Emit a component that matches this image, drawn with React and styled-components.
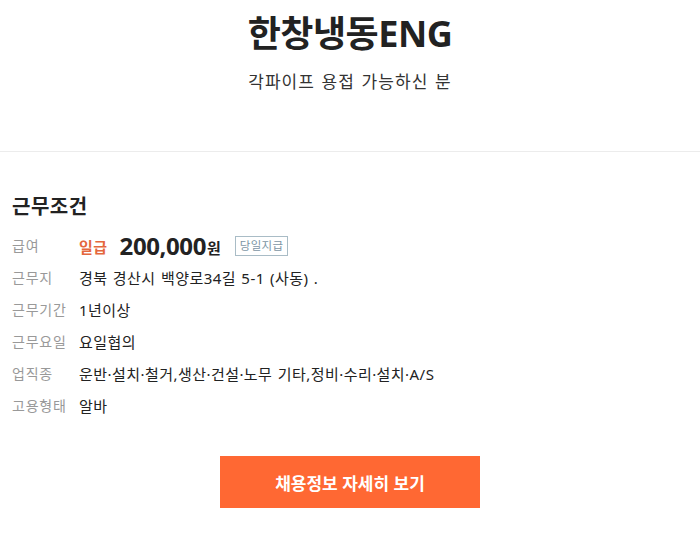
import styled, { createGlobalStyle } from "styled-components"

const Global = createGlobalStyle`
  body {
    margin: 0;
    background: #fff;
    font-family: "Noto Sans", "Noto Sans CJK KR", sans-serif;
    color: #222;
  }
`

const rows = [
  { label: "근무지", value: "경북 경산시 백양로34길 5-1 (사동) ." },
  { label: "근무기간", value: "1년이상" },
  { label: "근무요일", value: "요일협의" },
  { label: "업직종", value: "운반·설치·철거,생산·건설·노무 기타,정비·수리·설치·A/S" },
  { label: "고용형태", value: "알바" },
]

function App() {
  return (
    <Page>
      <Global />
      <Header>
        <Title>한창냉동ENG</Title>
        <Subtitle>각파이프 용접 가능하신 분</Subtitle>
      </Header>
      <Section>
        <SectionTitle>근무조건</SectionTitle>
        <Rows>
          <Row>
            <Label>급여</Label>
            <Pay>
              <PayType>일급</PayType>
              <Amount>200,000</Amount>
              <Won>원</Won>
              <Badge>당일지급</Badge>
            </Pay>
          </Row>
          {rows.map((r) => (
            <Row key={r.label}>
              <Label>{r.label}</Label>
              <Value>{r.value}</Value>
            </Row>
          ))}
        </Rows>
        <ButtonWrap>
          <DetailButton>채용정보 자세히 보기</DetailButton>
        </ButtonWrap>
      </Section>
    </Page>
  )
}

export default App

const Page = styled.div`
  width: 700px;
  height: 548px;
  overflow: hidden;
`
const Header = styled.div`
  display: flex;
  flex-direction: column;
  align-items: center;
  padding-top: 11px;
  height: 152px;
  box-sizing: border-box;
  border-bottom: 1px solid #ececec;
`
const Title = styled.h1`
  margin: 0;
  font-size: 36px;
  font-weight: 700;
  line-height: 46px;
  color: #222;
  letter-spacing: -0.5px;
`
const Subtitle = styled.p`
  margin: 14px 0 0;
  font-size: 17px;
  line-height: 22px;
  color: #333;
  letter-spacing: 1.1px;
  word-spacing: 1px;
`
const Section = styled.div`
  padding: 42px 12px 0;
`
const SectionTitle = styled.h2`
  margin: 0;
  font-size: 20px;
  font-weight: 700;
  line-height: 26px;
  color: #222;
  letter-spacing: 0.5px;
`
const Rows = styled.div`
  display: flex;
  flex-direction: column;
  margin-top: 10px;
`
const Row = styled.div`
  display: flex;
  align-items: center;
  height: 32px;
`
const Label = styled.div`
  width: 67px;
  font-size: 14px;
  line-height: 20px;
  color: #999;
  white-space: nowrap;
  letter-spacing: 0.8px;
`
const Value = styled.div`
  font-size: 15px;
  line-height: 20px;
  color: #222;
  letter-spacing: 0.45px;
  word-spacing: 1px;
`
const Pay = styled.div`
  display: flex;
  align-items: center;
`
const PayType = styled.span`
  font-size: 15px;
  font-weight: 700;
  color: #e4673d;
  margin-right: 12px;
  letter-spacing: 0.5px;
`
const Amount = styled.span`
  font-size: 24px;
  line-height: 28px;
  font-weight: 700;
  color: #222;
  letter-spacing: -0.4px;
`
const Won = styled.span`
  font-size: 15px;
  font-weight: 700;
  color: #222;
  margin: 3px 0 0 1px;
`
const Badge = styled.span`
  margin-left: 14px;
  padding: 0 4px;
  height: 18px;
  line-height: 17px;
  font-size: 11.5px;
  color: #7c95a4;
  border: 1px solid #a9bcc6;
  letter-spacing: 0.3px;
`
const ButtonWrap = styled.div`
  display: flex;
  justify-content: center;
  margin-top: 34px;
`
const DetailButton = styled.button`
  width: 260px;
  height: 52px;
  border: 0;
  background: #ff6833;
  color: #fff;
  font-family: inherit;
  font-size: 17px;
  font-weight: 700;
  cursor: pointer;
`
